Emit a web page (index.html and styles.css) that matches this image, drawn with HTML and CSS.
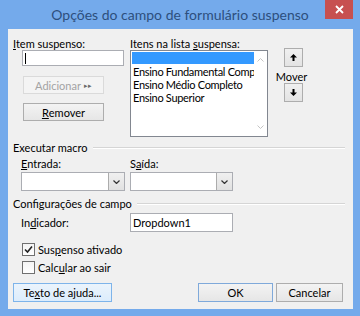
FILE: index.html
```html
<!DOCTYPE html>
<html>
	<head>
		<meta charset="utf-8">
		<title>Opções do campo de formulário suspenso</title>
		<link rel="stylesheet" href="styles.css">
	</head>
	<body>
		<div class="window">
			<div class="titlebar">
				<span class="title">Opções do campo de formulário suspenso</span>
				<span class="close">
					<svg width="9" height="9" viewBox="0 0 9 9"><path d="M1 1L8 8M8 1L1 8" stroke="#fff" stroke-width="1.8"/></svg>
				</span>
			</div>
			<div class="client">
				<div class="top">
					<div class="col-item">
						<div class="label"><u>I</u>tem suspenso:</div>
						<div class="textbox item-box"><span class="caret"></span></div>
						<div class="btn disabled add">Adicionar <span class="arrows">&#9656;&#9656;</span></div>
						<div class="btn remove"><u>R</u>emover</div>
					</div>
					<div class="col-list">
						<div class="label">Itens na lista <u>s</u>uspensa:</div>
						<div class="listbox">
							<div class="list-items">
								<div class="list-item selected"></div>
								<div class="list-item">Ensino Fundamental Comp</div>
								<div class="list-item">Ensino Médio Completo</div>
								<div class="list-item">Ensino Superior</div>
							</div>
							<div class="scrollbar">
								<svg width="7" height="4" viewBox="0 0 7 4"><path d="M0.5 3.5L3.5 0.5L6.5 3.5" fill="none" stroke="#c4c4c4" stroke-width="1"/></svg>
								<svg width="7" height="4" viewBox="0 0 7 4"><path d="M0.5 0.5L3.5 3.5L6.5 0.5" fill="none" stroke="#c4c4c4" stroke-width="1"/></svg>
							</div>
						</div>
					</div>
					<div class="col-move">
						<div class="btn small">
							<svg width="7" height="7" viewBox="0 0 7 7"><path d="M3.5 0L7 3.5H4.5V7H2.5V3.5H0Z" fill="#000"/></svg>
						</div>
						<div class="move-label">Mover</div>
						<div class="btn small">
							<svg width="7" height="7" viewBox="0 0 7 7"><path d="M3.5 7L7 3.5H4.5V0H2.5V3.5H0Z" fill="#000"/></svg>
						</div>
					</div>
				</div>

				<div class="group-title">Executar macro</div>
				<div class="fields">
					<div class="field">
						<div class="label"><u>E</u>ntrada:</div>
						<div class="combo combo-in">
							<span class="combo-btn">
								<svg width="7" height="4" viewBox="0 0 7 4"><path d="M0.5 0.5L3.5 3.5L6.5 0.5" fill="none" stroke="#333" stroke-width="1.2"/></svg>
							</span>
						</div>
					</div>
					<div class="field">
						<div class="label">S<u>a</u>ída:</div>
						<div class="combo">
							<span class="combo-btn">
								<svg width="7" height="4" viewBox="0 0 7 4"><path d="M0.5 0.5L3.5 3.5L6.5 0.5" fill="none" stroke="#333" stroke-width="1.2"/></svg>
							</span>
						</div>
					</div>
				</div>

				<div class="group-title second">Configurações de campo</div>
				<div class="fields indicator">
					<div class="label">In<u>d</u>icador:</div>
					<div class="textbox name-box">Dropdown1</div>
				</div>

				<div class="check first">
					<span class="box">
						<svg width="11" height="11" viewBox="0 0 11 11"><path d="M2 5.5L4.5 8L9 2.5" fill="none" stroke="#222" stroke-width="1.6"/></svg>
					</span>
					Sus<u>p</u>enso ativado
				</div>
				<div class="check">
					<span class="box"></span>
					Calc<u>u</u>lar ao sair
				</div>

				<div class="buttons">
					<div class="btn help">Te<u>x</u>to de ajuda...</div>
					<div class="btn ok">OK</div>
					<div class="btn cancel">Cancelar</div>
				</div>
			</div>
		</div>
	</body>
</html>
```

FILE: styles.css
```css
*{
	margin: 0;
	padding: 0;
	box-sizing: border-box;
}
body{
	width: 360px;
	height: 316px;
	overflow: hidden;
	background-color: #74aaeb;
	font-family: Lato, "Open Sans", sans-serif;
	font-size: 11px;
	color: #000;
}
u{
	text-decoration: underline;
	text-underline-offset: 1px;
}
.window{
	position: relative;
	width: 360px;
	height: 316px;
	background-color: #74aaeb;
}
.titlebar{
	display: flex;
	align-items: center;
	justify-content: center;
	height: 29px;
	padding-bottom: 1px;
}
.title{
	font-size: 14px;
	color: #2d4f7d;
}
.close{
	position: absolute;
	top: 0;
	left: 325px;
	width: 28px;
	height: 19px;
	display: flex;
	align-items: center;
	justify-content: center;
	background-color: #c75050;
}
.close svg{
	display: block;
}
.client{
	margin: 0 7px 0 8px;
	height: 280px;
	background-color: #f0f0f0;
	padding-top: 8px;
}
.label{
	height: 13px;
	line-height: 13px;
	white-space: nowrap;
}

/* upper part */
.top{
	display: grid;
	grid-template-columns: 117px 154px 19px;
	padding-left: 5px;
}
.textbox{
	background-color: #fff;
	border: 1px solid #abadb3;
}
.item-box{
	width: 102px;
	height: 16px;
	margin-left: 9px;
	padding: 2px 0 0 2px;
}
.caret{
	display: block;
	width: 1px;
	height: 11px;
	background-color: #000;
}
.btn{
	display: flex;
	align-items: center;
	justify-content: center;
	height: 18px;
	border: 1px solid #adadad;
	background: linear-gradient(#f3f3f3, #e6e6e6);
	white-space: nowrap;
}
.add, .remove{
	width: 81px;
	margin-left: 10px;
}
.add{
	margin-top: 10px;
}
.remove{
	margin-top: 9px;
}
.disabled{
	color: #a3a3a3;
	background: #f4f4f4;
	border-color: #dadada;
}
.arrows{
	margin-left: 3px;
	font-size: 7px;
	color: #6a6a6a;
	letter-spacing: 0;
}
.listbox{
	display: flex;
	width: 138px;
	height: 87px;
	background-color: #fff;
	border: 1px solid #828790;
	padding: 1px 0 0 1px;
}
.list-items{
	width: 122px;
}
.list-item{
	height: 13px;
	line-height: 13px;
	padding-left: 1px;
	white-space: nowrap;
	overflow: hidden;
	letter-spacing: -0.3px;
}
.list-item.selected{
	height: 12px;
	margin-bottom: 1px;
	background-color: #3399ff;
}
.scrollbar{
	flex: 1;
	display: flex;
	flex-direction: column;
	justify-content: space-between;
	align-items: center;
	padding: 6px 0 7px;
}
.scrollbar svg{
	display: block;
}
.col-move{
	padding-top: 11px;
}
.btn.small{
	width: 19px;
	height: 19px;
	background: linear-gradient(#f0f0f0, #e3e3e3);
}
.btn.small svg{
	display: block;
}
.move-label{
	margin: 3px -8px 0 -12px;
	height: 13px;
	line-height: 13px;
	text-align: center;
}

/* groups */
.group-title{
	display: flex;
	align-items: center;
	height: 13px;
	line-height: 13px;
	margin-top: 4px;
	padding: 0 8px 0 5px;
	white-space: nowrap;
}
.group-title::after{
	content: "";
	flex: 1;
	margin-left: 5px;
	border-top: 1px solid #d5d5d5;
	border-bottom: 1px solid #fff;
}
.group-title.second{
	margin-top: 6px;
}
.fields{
	display: grid;
	grid-template-columns: 109px 103px;
	padding-left: 13px;
	margin-top: 3px;
}
.combo{
	display: flex;
	justify-content: flex-end;
	width: 103px;
	height: 19px;
	margin-top: 2px;
	background-color: #fff;
	border: 1px solid #abadb3;
}
.combo-in{
	width: 104px;
}
.combo-btn{
	display: flex;
	align-items: center;
	justify-content: center;
	width: 16px;
	background: linear-gradient(#f0f0f0, #e1e1e1);
	border-left: 1px solid #acacac;
}
.combo-btn svg{
	display: block;
}
.indicator{
	align-items: center;
}
.name-box{
	height: 19px;
	line-height: 17px;
	padding-left: 2px;
}

/* checkboxes */
.check{
	display: flex;
	align-items: center;
	height: 13px;
	line-height: 13px;
	margin-top: 5px;
	padding-left: 14px;
	white-space: nowrap;
}
.check.first{
	margin-top: 11px;
}
.box{
	display: flex;
	align-items: center;
	justify-content: center;
	width: 13px;
	height: 13px;
	margin-right: 3px;
	border: 1px solid #707070;
	background: linear-gradient(#f4f4f4, #fff);
}
.box svg{
	display: block;
}

/* bottom buttons */
.buttons{
	display: flex;
	margin-top: 9px;
	padding: 0 10px 0 5px;
}
.buttons .btn{
	height: 19px;
}
.help{
	width: 99px;
	background: linear-gradient(#ebf4fc, #dcecfc);
	border-color: #7eb4ea;
}
.ok{
	width: 75px;
	margin-left: auto;
	border-color: #7fa9da;
}
.cancel{
	width: 67px;
	margin-left: 3px;
}
```
